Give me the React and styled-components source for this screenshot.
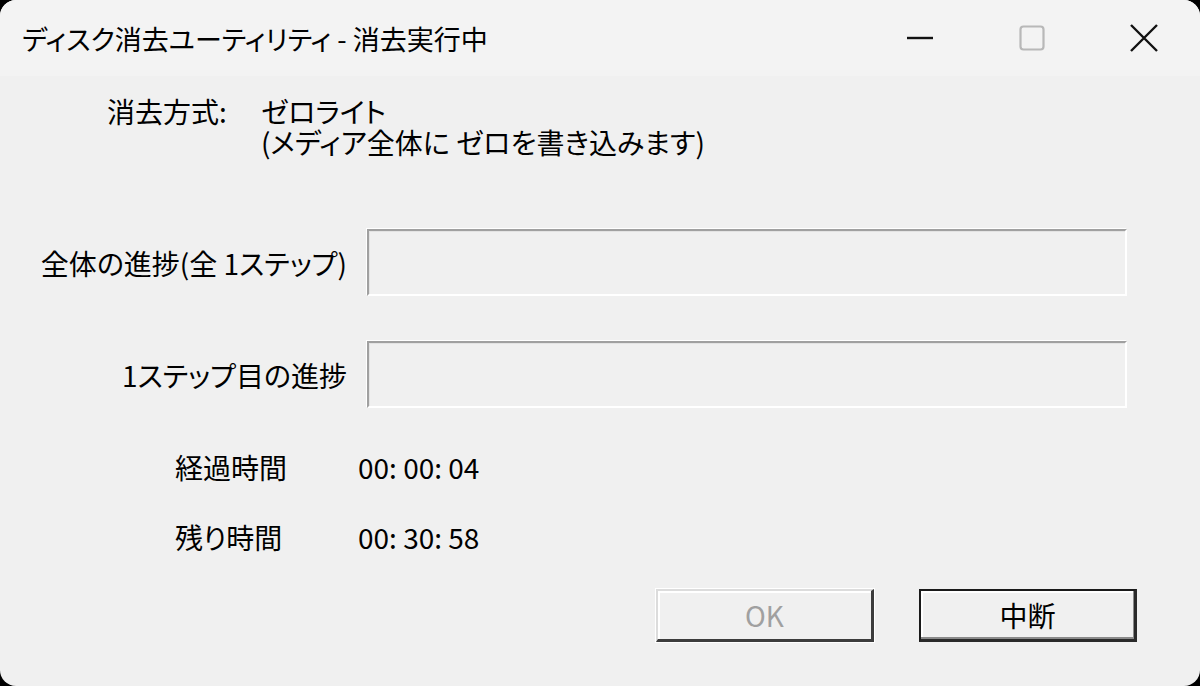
import React from "react";
import styled, { createGlobalStyle } from "styled-components";

const GlobalStyle = createGlobalStyle`
  html, body {
    margin: 0;
    padding: 0;
    background: #000;
  }
  body {
    font-family: "Noto Sans CJK JP", "Noto Sans", sans-serif;
  }
`;

const Window = styled.div`
  width: 1200px;
  height: 686px;
  background: #f0f0f0;
  border-radius: 16px;
  overflow: hidden;
  display: flex;
  flex-direction: column;
  color: #000;
  font-size: 28px;
  font-weight: 400;
  font-feature-settings: "palt";
`;

const TitleBar = styled.div`
  height: 76px;
  display: flex;
  align-items: center;
  background: #f3f3f3;
`;

const Title = styled.div`
  flex: 1;
  padding-left: 22px;
  font-size: 27px;
  line-height: 1;
`;

const Caption = styled.div`
  width: 112px;
  height: 76px;
  display: flex;
  align-items: center;
  justify-content: center;
`;

const Body = styled.div`
  display: flex;
  flex-direction: column;
  padding-top: 21px;
`;

const Method = styled.div`
  display: grid;
  grid-template-columns: 154px auto;
  padding-left: 107px;
  line-height: 1;
`;

const Lines = styled.div`
  display: flex;
  flex-direction: column;
  gap: 3px;
`;

const Progress = styled.div`
  display: flex;
  flex-direction: column;
  gap: 45px;
  margin-top: 73px;
`;

const ProgressRow = styled.div`
  display: grid;
  grid-template-columns: 347px 760px;
  column-gap: 20px;
  align-items: center;
`;

const ProgressLabel = styled.div`
  text-align: right;
  line-height: 1;
`;

const Bar = styled.div`
  height: 67px;
  box-sizing: border-box;
  border-top: 2px solid #a0a0a0;
  border-left: 2px solid #a0a0a0;
  border-bottom: 2px solid #fff;
  border-right: 2px solid #fff;
  box-shadow: inset 1px 1px 0 #e3e3e3, -1px -1px 0 #fff;
`;

const Times = styled.div`
  display: flex;
  flex-direction: column;
  gap: 39px;
  margin-top: 44px;
  padding-left: 175px;
`;

const TimeRow = styled.div`
  display: grid;
  grid-template-columns: 183px auto;
  line-height: 31px;
`;

const Buttons = styled.div`
  display: flex;
  gap: 45px;
  margin-top: 36px;
  padding-left: 656px;
`;

const Button = styled.div`
  width: 218px;
  height: 53px;
  box-sizing: border-box;
  display: flex;
  align-items: center;
  justify-content: center;
  line-height: 1;
  color: ${(p) => (p.disabled ? "#a0a0a0" : "#000")};
  border-style: solid;
  border-width: 2px 3px 3px 2px;
  border-color: ${(p) =>
    p.primary
      ? "#1a1a1a #2a2a2a #2a2a2a #1a1a1a"
      : "#dcdcdc #3c3c3c #3c3c3c #dcdcdc"};
  box-shadow: ${(p) =>
    p.primary
      ? "inset -1px -2px 0 #8a8a8a, inset 2px 2px 0 #fff"
      : "inset 2px 2px 0 #fff, 0 0 0 1px #fff"};
`;

export default function App() {
  return (
    <>
      <GlobalStyle />
      <Window>
        <TitleBar>
          <Title>ディスク消去ユーティリティ - 消去実行中</Title>
          <Caption>
            <svg width="28" height="4" viewBox="0 0 28 4">
              <line x1="1" y1="2" x2="27" y2="2" stroke="#111" strokeWidth="2.4" />
            </svg>
          </Caption>
          <Caption>
            <svg width="26" height="26" viewBox="0 0 26 26">
              <rect x="1.5" y="1.5" width="23" height="23" rx="3" fill="none" stroke="#b8b8b8" strokeWidth="2.2" />
            </svg>
          </Caption>
          <Caption>
            <svg width="30" height="30" viewBox="0 0 30 30">
              <path d="M2 2 L28 28 M28 2 L2 28" stroke="#111" strokeWidth="2.4" />
            </svg>
          </Caption>
        </TitleBar>
        <Body>
          <Method>
            <div>消去方式:</div>
            <Lines>
              <div>ゼロライト</div>
              <div>(メディア全体に ゼロを書き込みます)</div>
            </Lines>
          </Method>
          <Progress>
            <ProgressRow>
              <ProgressLabel>全体の進捗(全 1ステップ)</ProgressLabel>
              <Bar />
            </ProgressRow>
            <ProgressRow>
              <ProgressLabel>1ステップ目の進捗</ProgressLabel>
              <Bar />
            </ProgressRow>
          </Progress>
          <Times>
            <TimeRow>
              <div>経過時間</div>
              <div>00: 00: 04</div>
            </TimeRow>
            <TimeRow>
              <div>残り時間</div>
              <div>00: 30: 58</div>
            </TimeRow>
          </Times>
          <Buttons>
            <Button disabled>OK</Button>
            <Button primary>中断</Button>
          </Buttons>
        </Body>
      </Window>
    </>
  );
}
